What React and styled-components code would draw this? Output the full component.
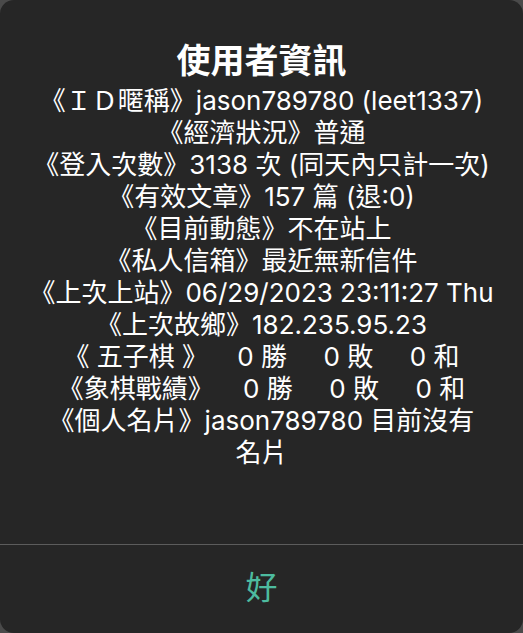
import React from 'react';
import styled, { createGlobalStyle } from 'styled-components';

const GlobalStyle = createGlobalStyle`
  html, body {
    margin: 0;
    padding: 0;
    background: #4a4a4a;
  }
`;

const LINES = [
  '《ＩＤ暱稱》jason789780 (leet1337)',
  '《經濟狀況》普通',
  '《登入次數》3138 次 (同天內只計一次)',
  '《有效文章》157 篇 (退:0)',
  '《目前動態》不在站上',
  '《私人信箱》最近無新信件',
  '《上次上站》06/29/2023 23:11:27 Thu',
  '《上次故鄉》182.235.95.23',
  '《 五子棋 》    0 勝     0 敗     0 和',
  '《象棋戰績》    0 勝     0 敗     0 和',
];

const App = () => {
  return (
    <>
      <GlobalStyle />
      <Alert>
        <Content>
          <Title>使用者資訊</Title>
          <Message>
            {LINES.map((line) => (
              <Line key={line}>{line}</Line>
            ))}
            <Line>
              《個人名片》jason789780 目前沒有<Word>名片</Word>
            </Line>
          </Message>
        </Content>
        <Actions>
          <ActionButton>好</ActionButton>
        </Actions>
      </Alert>
    </>
  );
};

const Alert = styled.div`
  height: 100vh;
  display: flex;
  flex-direction: column;
  background: #262626;
  border-radius: 14px;
  color: #ffffff;
  font-family: Inter, 'Noto Sans CJK TC', sans-serif;
  overflow: hidden;
`;

const Content = styled.div`
  flex: 1;
  padding: 38px 28px 0;
  text-align: center;
`;

const Title = styled.h2`
  margin: 0;
  font-size: 34px;
  line-height: 46px;
  font-weight: 600;
`;

const Message = styled.div`
  margin-top: 1px;
  font-size: 26px;
  line-height: 32px;
`;

const Line = styled.div`
  white-space: pre-wrap;
`;

const Word = styled.span`
  white-space: nowrap;
`;

const Actions = styled.div`
  border-top: 1px solid #5c5c5c;
  height: 88px;
  display: flex;
`;

const ActionButton = styled.button`
  flex: 1;
  background: none;
  border: none;
  color: #4dbb9f;
  font-family: 'Noto Sans CJK TC', sans-serif;
  font-size: 32px;
  padding: 0 0 8px;
`;

export default App;
